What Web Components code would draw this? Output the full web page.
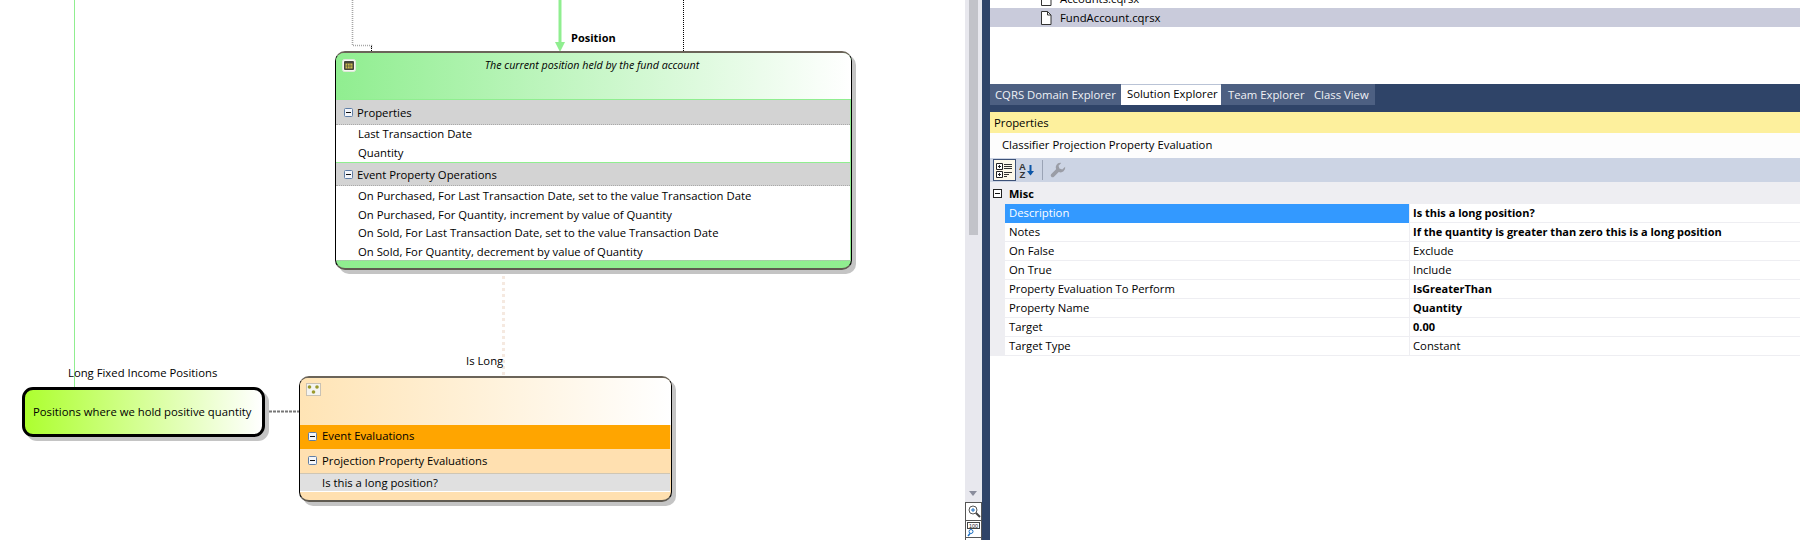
<!DOCTYPE html>
<html>
<head>
<meta charset="utf-8">
<style>
  html, body { margin: 0; height: 540px; overflow: hidden; background: #fff; }
  body { font: 11.3px/16px "Open Sans", "Noto Sans", sans-serif; color: #000; }
</style>
</head>
<body>

<app-shell>
  <diagram-canvas slot="canvas">
    <float-label style="left:68px;top:365px">Long Fixed Income Positions</float-label>
    <float-label style="left:466px;top:353px">Is Long</float-label>
    <float-label style="left:571px;top:30px;font-weight:700;font-size:11px">Position</float-label>

    <class-node icon="table" tint="#90ee90" edge="#90ee90" style="left:335px;top:51px;width:517px;height:219px;--head:47px;--foot:#90ee90;--foot-h:8px;--foot-line:#b5b5b5">
      <span slot="caption">The current position held by the fund account</span>
      <node-section heading="Properties" style="--title-h:25px;--title-top:1px">
        <node-item>Last Transaction Date</node-item>
        <node-item>Quantity</node-item>
      </node-section>
      <node-section heading="Event Property Operations" edged style="--title-top:2px;--item-lh:19px">
        <node-item>On Purchased, For Last Transaction Date, set to the value Transaction Date</node-item>
        <node-item>On Purchased, For Quantity, increment by value of Quantity</node-item>
        <node-item>On Sold, For Last Transaction Date, set to the value Transaction Date</node-item>
        <node-item>On Sold, For Quantity, decrement by value of Quantity</node-item>
      </node-section>
    </class-node>

    <class-node icon="dots" tint="#ffe4b5" edge="transparent" style="left:299px;top:376px;width:373px;height:126px;--head:47px;--icon-top:5px;--foot:#ffe0b0;--foot-h:8px;--bar:#ffa500;--bar2:#ffe0b0">
      <node-section heading="Event Evaluations" variant="bar" style="--title-pad:2px"></node-section>
      <node-section heading="Projection Property Evaluations" variant="bar2" style="--title-pad:1px">
        <node-item shaded>Is this a long position?</node-item>
      </node-section>
    </class-node>

    <pill-node style="left:22px;top:387px;width:243px;height:50px">Positions where we hold positive quantity</pill-node>
  </diagram-canvas>

  <zoom-scroll slot="scroll"></zoom-scroll>

  <side-panel slot="side">
    <file-tree slot="tree">
      <tree-row>Accounts.cqrsx</tree-row>
      <tree-row selected>FundAccount.cqrsx</tree-row>
    </file-tree>
    <tool-tabs slot="tabs">
      <tool-tab style="width:131px" dim>CQRS Domain Explorer</tool-tab>
      <tool-tab style="width:100px" active>Solution Explorer</tool-tab>
      <tool-tab style="width:87px;padding-left:7px" dim>Team Explorer</tool-tab>
      <tool-tab style="width:67px;padding-left:6px" dim>Class View</tool-tab>
    </tool-tabs>
    <property-grid slot="props" heading="Properties" subject="Classifier Projection Property Evaluation" group="Misc">
      <prop-row name="Description" value="Is this a long position?" bold selected></prop-row>
      <prop-row name="Notes" value="If the quantity is greater than zero this is a long position" bold></prop-row>
      <prop-row name="On False" value="Exclude"></prop-row>
      <prop-row name="On True" value="Include"></prop-row>
      <prop-row name="Property Evaluation To Perform" value="IsGreaterThan" bold></prop-row>
      <prop-row name="Property Name" value="Quantity" bold></prop-row>
      <prop-row name="Target" value="0.00" bold></prop-row>
      <prop-row name="Target Type" value="Constant"></prop-row>
    </property-grid>
  </side-panel>
</app-shell>

<script>
function shadow(el, html) {
  el.attachShadow({ mode: "open" }).innerHTML = html;
}

const MINUS_BOX = `<svg width="9" height="9" viewBox="0 0 9 9" style="display:block;flex:none">
  <rect x=".5" y=".5" width="8" height="8" rx="1" fill="#f4f6fa" stroke="#5f7ea6"/>
  <rect x="2" y="4" width="5" height="1" fill="#111"/>
</svg>`;

const NODE_ICONS = {
  table: `<svg width="14" height="13" viewBox="0 0 14 13">
    <rect x=".5" y=".5" width="13" height="12" rx="2" fill="#f6f8f2" stroke="#dfe8da"/>
    <rect x="2" y="2" width="10" height="9" rx="1" fill="#45453c"/>
    <rect x="3.500" y="4.500" width="7" height="5" fill="#c9b84c"/>
    <path d="M5.500 4.500v5M8 4.500v5M3.500 7h7" stroke="#45453c" stroke-width=".6"/>
  </svg>`,
  dots: `<svg width="15" height="13" viewBox="0 0 15 13">
    <rect x=".5" y=".5" width="14" height="12" fill="#f4f4f0" stroke="#999" stroke-dasharray="1 1"/>
    <circle cx="3.5" cy="4" r="1.8" fill="#9c9a2c"/>
    <circle cx="11" cy="4" r="1.8" fill="#9c9a2c"/>
    <circle cx="7.5" cy="9" r="1.8" fill="#9c9a2c"/>
  </svg>`
};

class AppShell extends HTMLElement {
  constructor() {
    super();
    shadow(this, `<style>
      :host { display: flex; width: 1800px; height: 540px; overflow: hidden; }
      ::slotted([slot=canvas]) { flex: 0 0 965px; }
      ::slotted([slot=scroll]) { flex: 0 0 17px; }
      ::slotted([slot=side]) { flex: 1; }
    </style>
    <slot name="canvas"></slot><slot name="scroll"></slot><slot name="side"></slot>`);
  }
}

class DiagramCanvas extends HTMLElement {
  constructor() {
    super();
    shadow(this, `<style>
      :host { display: block; position: relative; background: #fff; overflow: hidden; height: 540px; }
      svg { position: absolute; left: 0; top: 0; }
    </style>
    <svg width="965" height="540" fill="none">
      <path d="M74.5 0V388" stroke="#90ee90"/>
      <path d="M352.5 0V45.5H371.5V48" stroke="#a6a6a6" stroke-dasharray="1 1" stroke-width="1.6"/>
      <path d="M371.5 46V51" stroke="#000" stroke-dasharray="1 1"/>
      <path d="M683.5 0V51" stroke="#000" stroke-dasharray="1 1"/>
      <path d="M560 0V43" stroke="#90ee90" stroke-width="3"/>
      <path d="M555 42H565L560 52Z" fill="#90ee90"/>
      <path d="M503.5 270V376" stroke="#f5e9e0" stroke-width="3" stroke-dasharray="3 3"/>
      <path d="M265 411.5H299" stroke="#777" stroke-width="2" stroke-dasharray="3 1"/>
    </svg>
    <slot></slot>`);
  }
}

class FloatLabel extends HTMLElement {
  constructor() {
    super();
    shadow(this, `<style>
      :host { display: block; position: absolute; white-space: nowrap; }
    </style><slot></slot>`);
  }
}

class ClassNode extends HTMLElement {
  constructor() {
    super();
    const tint = this.getAttribute("tint");
    const edge = this.getAttribute("edge");
    shadow(this, `<style>
      :host {
        display: flex; flex-direction: column; position: absolute; box-sizing: border-box;
        border: 1px solid #000; border-top: 2px solid #6b6459; border-bottom: 2px solid #5f5a50;
        border-radius: 10px; background: var(--foot); overflow: visible;
        box-shadow: 4px 4px 0 #c4c4c4;
      }
      .head {
        flex: 0 0 var(--head); display: flex; box-sizing: border-box; padding: var(--icon-top, 6px) 0 0 6px;
        border-radius: 8px 8px 0 0; border-bottom: 1px solid ${edge};
        background: linear-gradient(to right, ${tint}, #fff);
      }
      .icon { flex: none; height: 13px; }
      .icon svg { display: block; }
      .caption { flex: 1; text-align: center; font-style: italic; font-size: 10.7px; margin-top: -2px; padding-right: 23px; }
      .body { flex: 1; display: flex; flex-direction: column; border-right: 1px solid ${edge}; }
      .foot { flex: 0 0 var(--foot-h, 9px); box-sizing: border-box; border-top: 1px dotted var(--foot-line, transparent); }
    </style>
    <div class="head"><div class="icon">${NODE_ICONS[this.getAttribute("icon")]}</div><div class="caption"><slot name="caption"></slot></div></div>
    <div class="body"><slot></slot></div>
    <div class="foot"></div>`);
  }
}

class NodeSection extends HTMLElement {
  constructor() {
    super();
    shadow(this, `<style>
      :host { display: block; }
      .title {
        display: flex; align-items: center; gap: 4px; height: var(--title-h, 24px); box-sizing: border-box;
        padding: var(--title-top, 0) 0 var(--title-pad, 0) 8px; background: #d3d3d3; border-bottom: 1px dotted #a9a9a9;
      }
      :host([edged]) .title { box-shadow: inset 0 1px 0 #90ee90; }
      :host([variant=bar]) .title { background: var(--bar); border: 0; gap: 5px; }
      :host([variant=bar2]) .title { background: var(--bar2); border: 0; gap: 5px; }
      .items { background: #fff; }
      :host([variant]) .items { background: transparent; }
    </style>
    <div class="title">${MINUS_BOX}<span>${this.getAttribute("heading")}</span></div>
    <div class="items"><slot></slot></div>`);
  }
}

class NodeItem extends HTMLElement {
  constructor() {
    super();
    shadow(this, `<style>
      :host { display: block; height: 18.5px; line-height: var(--item-lh, 18px); padding-left: 22px; white-space: nowrap; }
      :host([shaded]) {
        height: 19px; box-sizing: border-box; background: #e0e0e0;
        border-top: 1px solid #cfc6b4; border-bottom: 1px solid #fff; line-height: 17px;
      }
    </style><slot></slot>`);
  }
}

class PillNode extends HTMLElement {
  constructor() {
    super();
    shadow(this, `<style>
      :host {
        display: flex; align-items: center; position: absolute; box-sizing: border-box;
        padding: 0 0 0 8px; white-space: nowrap;
        border: 3px solid #000; border-radius: 11px;
        background: linear-gradient(to right, #adff2f, #fff);
        box-shadow: 4px 4px 0 #c4c4c4;
      }
    </style><slot></slot>`);
  }
}

class ZoomScroll extends HTMLElement {
  constructor() {
    super();
    shadow(this, `<style>
      :host { display: flex; flex-direction: column; height: 540px; background: #e8e8ee; box-sizing: border-box; }
      .track { flex: 1; position: relative; }
      .thumb { position: absolute; left: 4px; width: 9px; top: 0; height: 235px; background: #c2c3c9; }
      .arrow { position: absolute; left: 4px; bottom: 6px; width: 0; height: 0;
        border: 4.5px solid transparent; border-bottom: 0; border-top: 5px solid #8a8d9c; }
      .zoom {
        display: block; box-sizing: border-box; width: 17px; height: 18px;
        background: #fff; border: 1px solid #555; border-bottom: 0; flex: none;
      }
      svg { display: block; }
    </style>
    <div class="track"><div class="thumb"></div><div class="arrow"></div></div>
    <div class="zoom"><svg width="15" height="17" viewBox="0 0 15 17" fill="none">
      <circle cx="7" cy="7" r="4" stroke="#555" fill="#fff"/>
      <path d="M5 7h4M7 5v4" stroke="#1b6ec2"/>
      <path d="M10 10l4 4" stroke="#444" stroke-width="2"/>
    </svg></div>
    <div class="zoom" style="height:17px"><svg width="15" height="16" viewBox="0 0 15 16" fill="none">
      <rect x="1.500" y="1.500" width="12" height="6" fill="#fff" stroke="#444"/>
      <text x="7.500" y="6.600" text-anchor="middle" font-family="'Liberation Sans',sans-serif" font-size="5.500" fill="#222">100</text>
      <circle cx="5" cy="10.500" r="2" stroke="#1b6ec2"/>
      <path d="M4 12.500l-2 2.500" stroke="#1b6ec2" stroke-width="1.500"/>
    </svg></div>
    <div class="zoom" style="height:3px"></div>`);
  }
}

class SidePanel extends HTMLElement {
  constructor() {
    super();
    shadow(this, `<style>
      :host { display: flex; flex-direction: column; height: 540px; box-sizing: border-box;
        border-left: 8px solid #2f4468; }
      ::slotted([slot=props]) { flex: 1; }
    </style>
    <slot name="tree"></slot><slot name="tabs"></slot><slot name="props"></slot>`);
  }
}

class FileTree extends HTMLElement {
  constructor() {
    super();
    shadow(this, `<style>
      :host { display: block; height: 84px; background: #fff; overflow: hidden; }
      .list { margin-top: -11px; }
    </style><div class="list"><slot></slot></div>`);
  }
}

class TreeRow extends HTMLElement {
  constructor() {
    super();
    shadow(this, `<style>
      :host { display: flex; align-items: center; gap: 8px; height: 19px; padding-left: 50px; white-space: nowrap; }
      :host([selected]) { background: #c9cbdb; }
      svg { flex: none; display: block; }
    </style>
    <svg width="12" height="14" viewBox="0 0 12 14">
      <path d="M1.500 .5H7.500L11 4V13.500H1.500Z" fill="#fff" stroke="#333"/>
      <path d="M7.500 .5V4H11" fill="none" stroke="#333"/>
    </svg><slot></slot>`);
  }
}

class ToolTabs extends HTMLElement {
  constructor() {
    super();
    shadow(this, `<style>
      :host { display: flex; height: 28px; box-sizing: border-box; padding-bottom: 7px; background: #2f4468; }
    </style><slot></slot>`);
  }
}

class ToolTab extends HTMLElement {
  constructor() {
    super();
    shadow(this, `<style>
      :host { display: block; box-sizing: border-box; padding: 3px 0 0 5px; white-space: nowrap; overflow: hidden; }
      :host([dim]) { background: #4d6082; color: #f0f2f6; }
      :host([active]) { background: #fff; color: #000; box-shadow: inset 0 1px 0 #b9c3d6; padding-top: 2px; padding-left: 6px; }
    </style><slot></slot>`);
  }
}

class PropertyGrid extends HTMLElement {
  constructor() {
    super();
    shadow(this, `<style>
      :host { display: flex; flex-direction: column; background: #fff; }
      .title { height: 21px; line-height: 22px; padding-left: 4px; background: #fdf09d; }
      .subject { height: 25px; line-height: 24px; padding-left: 12px; background: #fdfdfd; }
      .tools { display: flex; align-items: center; height: 24px; padding-left: 3px; background: #ccd4e4; }
      .tool { display: flex; align-items: center; justify-content: center; box-sizing: border-box; height: 22px; }
      .on { width: 23px; background: #fdf9ea; border: 1px solid #3d5278; }
      .sep { width: 1px; height: 20px; background: #9aa3b5; margin: 0 7px 0 5px; }
      .group {
        display: flex; align-items: center; gap: 7px; height: 21px; padding: 1px 0 0 3px;
        background: #eeeef2; font-weight: 700; font-size: 11px;
      }
      .rows { border-left: 15px solid #eeeef2; }
      svg { display: block; }
    </style>
    <div class="title">${this.getAttribute("heading")}</div>
    <div class="subject">${this.getAttribute("subject")}</div>
    <div class="tools">
      <div class="tool on"><svg width="17" height="15" viewBox="0 0 17 15">
        <path d="M.5 .5h6v6h-6zM.5 8.500h6v6h-6z" fill="#fff" stroke="#222"/>
        <path d="M2 3.500h3M3.500 2v3M2 11.500h3M3.500 10v3" stroke="#222"/>
        <path d="M8 1.500h8M8 3.500h8M8 5.500h8M8 9.500h8M8 11.500h5M8 13.500h3" stroke="#333"/>
      </svg></div>
      <div class="tool" style="width:21px"><svg width="15" height="16" viewBox="0 0 15 16">
        <text x="0" y="7.500" font-family="'Liberation Sans',sans-serif" font-size="9.500" font-weight="700" fill="#333">A</text>
        <text x=".5" y="15.800" font-family="'Liberation Sans',sans-serif" font-size="9.500" font-weight="700" fill="#333">Z</text>
        <path d="M11.500 3v9" stroke="#0b56a8" stroke-width="2"/>
        <path d="M8 9h7L11.500 13.500Z" fill="#0b56a8"/>
      </svg></div>
      <div class="sep"></div>
      <div class="tool"><svg width="16" height="16" viewBox="0 0 15 15">
        <path d="M9.500 .8a4.300 4.300 0 0 0-3.800 6L1 11.500a1.800 1.800 0 0 0 2.500 2.500L8.200 9.300a4.300 4.300 0 0 0 6-4.800L11.500 7 8.800 6.200 8 3.500 10.500 1Z" fill="#9a9da6"/>
      </svg></div>
    </div>
    <div class="group"><svg width="9" height="9" viewBox="0 0 9 9"><rect x=".5" y=".5" width="8" height="8" fill="#fff" stroke="#222"/><rect x="2" y="4" width="5" height="1" fill="#111"/></svg><span>${this.getAttribute("group")}</span></div>
    <div class="rows"><slot></slot></div>`);
  }
}

class PropRow extends HTMLElement {
  constructor() {
    super();
    shadow(this, `<style>
      :host { display: grid; grid-template-columns: 404px 1fr; height: 19px; line-height: 18px; white-space: nowrap; }
      div { box-sizing: border-box; height: 19px; border-bottom: 1px solid #eeeef2; }
      .name { padding-left: 4px; }
      .value { padding-left: 3px; border-left: 1px solid #eeeef2; }
      :host([selected]) .name { background: #3399ff; color: #fff; border-bottom-color: #3399ff; }
      :host([bold]) .value { font-weight: 700; font-size: 11px; }
    </style>
    <div class="name">${this.getAttribute("name")}</div>
    <div class="value">${this.getAttribute("value")}</div>`);
  }
}

customElements.define("app-shell", AppShell);
customElements.define("diagram-canvas", DiagramCanvas);
customElements.define("float-label", FloatLabel);
customElements.define("class-node", ClassNode);
customElements.define("node-section", NodeSection);
customElements.define("node-item", NodeItem);
customElements.define("pill-node", PillNode);
customElements.define("zoom-scroll", ZoomScroll);
customElements.define("side-panel", SidePanel);
customElements.define("file-tree", FileTree);
customElements.define("tree-row", TreeRow);
customElements.define("tool-tabs", ToolTabs);
customElements.define("tool-tab", ToolTab);
customElements.define("property-grid", PropertyGrid);
customElements.define("prop-row", PropRow);
</script>
</body>
</html>
